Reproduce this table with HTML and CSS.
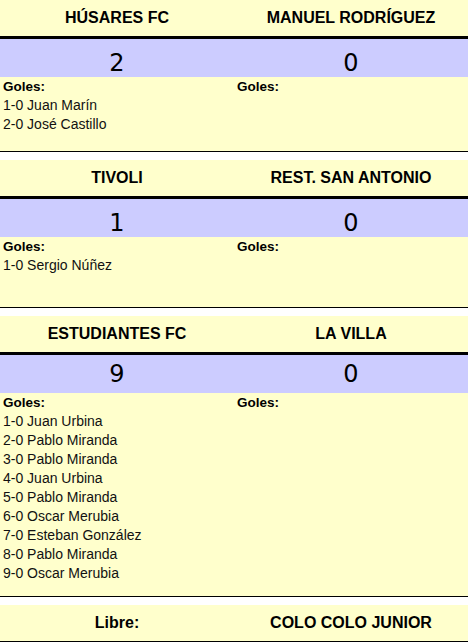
FILE: index.html
```html
<!DOCTYPE html>
<html lang="es">
<head>
<meta charset="utf-8">
<title>Resultados</title>
<link rel="stylesheet" href="styles.css">
</head>
<body>
<div class="fixture">
  <section class="match">
    <div class="row teams">
      <div class="cell">HÚSARES FC</div>
      <div class="cell">MANUEL RODRÍGUEZ</div>
    </div>
    <div class="row scores score-low">
      <div class="cell">2</div>
      <div class="cell">0</div>
    </div>
    <div class="row goals goals-m1">
      <div class="cell">
        <div class="goals-title">Goles:</div>
        <div>1-0 Juan Marín</div>
        <div>2-0 José Castillo</div>
      </div>
      <div class="cell">
        <div class="goals-title">Goles:</div>
      </div>
    </div>
  </section>

  <section class="match">
    <div class="row teams">
      <div class="cell">TIVOLI</div>
      <div class="cell">REST. SAN ANTONIO</div>
    </div>
    <div class="row scores score-low">
      <div class="cell">1</div>
      <div class="cell">0</div>
    </div>
    <div class="row goals">
      <div class="cell">
        <div class="goals-title">Goles:</div>
        <div>1-0 Sergio Núñez</div>
      </div>
      <div class="cell">
        <div class="goals-title">Goles:</div>
      </div>
    </div>
  </section>

  <section class="match">
    <div class="row teams">
      <div class="cell">ESTUDIANTES FC</div>
      <div class="cell">LA VILLA</div>
    </div>
    <div class="row scores">
      <div class="cell">9</div>
      <div class="cell">0</div>
    </div>
    <div class="row goals">
      <div class="cell">
        <div class="goals-title">Goles:</div>
        <div>1-0 Juan Urbina</div>
        <div>2-0 Pablo Miranda</div>
        <div>3-0 Pablo Miranda</div>
        <div>4-0 Juan Urbina</div>
        <div>5-0 Pablo Miranda</div>
        <div>6-0 Oscar Merubia</div>
        <div>7-0 Esteban González</div>
        <div>8-0 Pablo Miranda</div>
        <div>9-0 Oscar Merubia</div>
      </div>
      <div class="cell">
        <div class="goals-title">Goles:</div>
      </div>
    </div>
  </section>

  <section class="match match-free">
    <div class="row teams">
      <div class="cell">Libre:</div>
      <div class="cell">COLO COLO JUNIOR</div>
    </div>
  </section>
</div>
</body>
</html>
```

FILE: styles.css
```css
html, body {
  margin: 0;
  padding: 0;
  background: #ffffff;
}

body {
  font-family: "Liberation Sans", Arial, sans-serif;
  color: #000;
}

.fixture {
  width: 468px;
  display: flex;
  flex-direction: column;
  gap: 8px;
}

.match {
  display: flex;
  flex-direction: column;
  border-bottom: 1px solid #000;
}

.match-free {
  border-bottom: none;
}

.row {
  display: grid;
  grid-template-columns: 234px 234px;
}

.teams {
  background: #ffffcc;
  height: 36px;
  border-bottom: 3px solid #000;
  font-weight: bold;
  font-size: 16px;
}

.teams .cell {
  display: flex;
  align-items: center;
  justify-content: center;
}

.scores {
  background: #ccccff;
  height: 38px;
  font-family: "DejaVu Sans", Verdana, sans-serif;
  font-size: 24px;
}

.scores .cell {
  display: flex;
  align-items: center;
  justify-content: center;
}

.score-low .cell {
  padding-top: 9px;
}

.goals {
  background: #ffffcc;
  min-height: 70px;
  font-size: 14px;
  line-height: 19px;
  color: #111;
}

.goals-m1 {
  min-height: 74px;
}

.goals .cell {
  padding: 0 0 13px 3px;
}

.goals-title {
  font-weight: bold;
  font-size: 13.5px;
  color: #000;
}
```
